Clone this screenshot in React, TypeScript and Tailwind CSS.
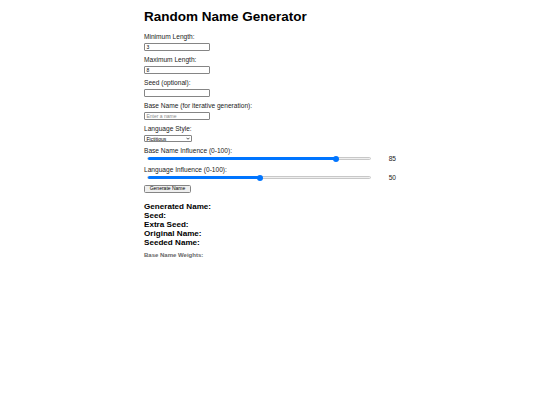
import React from "react";

function Field({ label, children }: { label: string; children: React.ReactNode }) {
  return (
    <div className="flex flex-col items-start">
      <label className="text-[6.6px] leading-[8px] text-[#222] mb-[2px]">{label}</label>
      {children}
    </div>
  );
}

function Slider({ value }: { value: number }) {
  const pct = value / 100;
  const thumb = 3 + pct * 218;
  return (
    <div className="flex items-center h-[7px]">
      <div className="w-[230px] flex items-center px-[3px]">
        <div className="relative w-[224px] h-[3px] rounded-full bg-[#efefef] border-[0.5px] border-[#c8c8c8]">
          <div className="absolute left-0 top-[-0.5px] h-[3px] rounded-full bg-[#0075ff]" style={{ width: thumb }} />
          <div
            className="absolute top-[-2px] w-[6px] h-[6px] rounded-full bg-[#0075ff]"
            style={{ left: thumb - 3 }}
          />
        </div>
      </div>
      <span className="flex-1 text-right text-[6.6px] leading-[7px] text-[#222]">{value}</span>
    </div>
  );
}

export default function App() {
  return (
    <div className="w-[540px] h-[405px] bg-white leading-none" style={{ fontFamily: '"Liberation Sans", Arial, sans-serif' }}>
      <div className="w-[252px] mx-auto pt-[9px] flex flex-col">
        <h1 className="text-[13.5px] leading-[16px] font-bold text-black mb-[8px]">Random Name Generator</h1>
        <div className="flex flex-col gap-[5px]">
          <Field label="Minimum Length:">
            <div className="w-[66px] h-[8px] border-[0.5px] border-[#858585] rounded-[1px] text-[5px] leading-[7px] px-[1.5px] text-black">3</div>
          </Field>
          <Field label="Maximum Length:">
            <div className="w-[66px] h-[8px] border-[0.5px] border-[#858585] rounded-[1px] text-[5px] leading-[7px] px-[1.5px] text-black">8</div>
          </Field>
          <Field label="Seed (optional):">
            <div className="w-[66px] h-[8px] border-[0.5px] border-[#858585] rounded-[1px]" />
          </Field>
          <Field label="Base Name (for iterative generation):">
            <div className="w-[66px] h-[8px] border-[0.5px] border-[#858585] rounded-[1px] text-[5px] leading-[7px] px-[1.5px] text-[#8a8a8a]">Enter a name</div>
          </Field>
          <Field label="Language Style:">
            <div className="w-[48px] h-[7px] border-[0.5px] border-[#858585] rounded-[1px] flex items-center justify-between px-[1.5px]">
              <span className="text-[5px] leading-[6px] text-black">Fictitious</span>
              <svg width="4" height="3" viewBox="0 0 8 6">
                <path d="M1 1.5 L4 4.5 L7 1.5" fill="none" stroke="#222" strokeWidth="1.5" />
              </svg>
            </div>
          </Field>
        </div>
        <div className="mt-[4.5px] flex flex-col">
          <label className="text-[6.6px] leading-[8px] text-[#222]">Base Name Influence (0-100):</label>
          <Slider value={85} />
          <label className="mt-[4px] text-[6.6px] leading-[8px] text-[#222]">Language Influence (0-100):</label>
          <Slider value={50} />
        </div>
        <div className="mt-[4px] flex">
          <div className="flex items-center justify-center w-[47px] h-[8px] bg-[#efefef] border-[0.5px] border-[#858585] rounded-[1.5px] text-[5px] leading-[7px] text-black">
            Generate Name
          </div>
        </div>
        <div className="mt-[9px] flex flex-col text-[8.1px] leading-[9px] font-bold text-black">
          <div>Generated Name:</div>
          <div>Seed:</div>
          <div>Extra Seed:</div>
          <div>Original Name:</div>
          <div>Seeded Name:</div>
        </div>
        <div className="mt-[5px] text-[6px] leading-[7px] font-bold text-[#666]">Base Name Weights:</div>
      </div>
    </div>
  );
}
